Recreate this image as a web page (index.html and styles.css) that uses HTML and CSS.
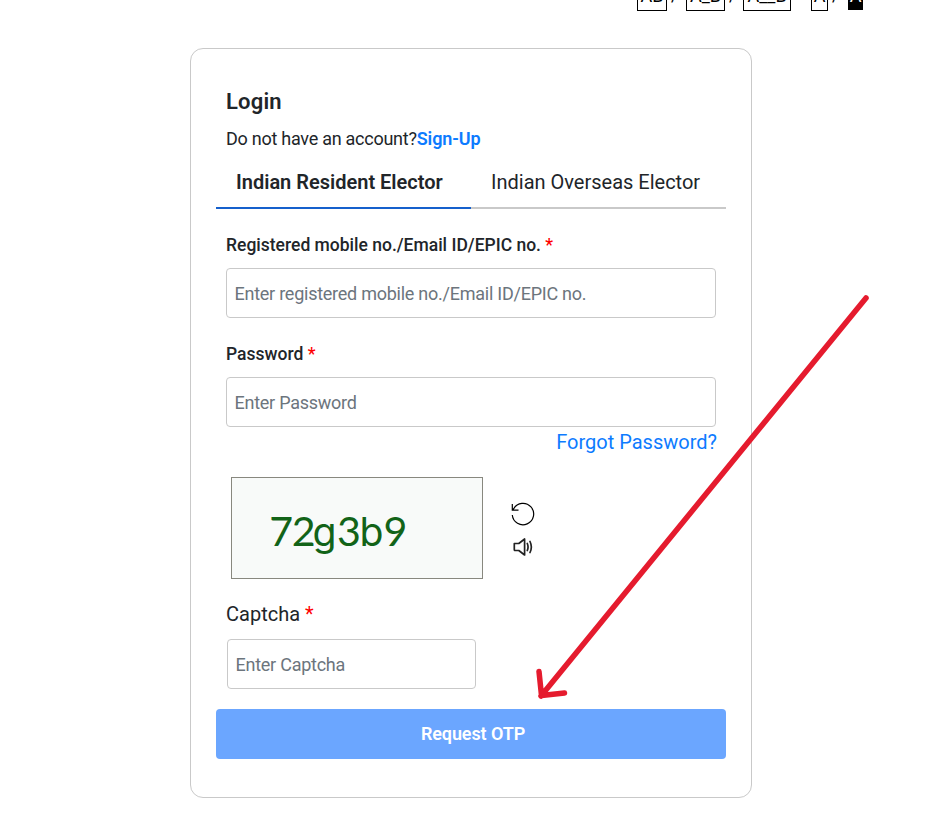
FILE: index.html
```
<!DOCTYPE html>
<html lang="en">
<head>
    <meta charset="UTF-8">
    <meta name="viewport" content="width=device-width, initial-scale=1.0">
    <title>Login</title>
    <link rel="stylesheet" href="styles.css">
</head>
<body>
    <div class="toolbar">
        <span class="box box-sm">AB</span>
        <span class="slash">/</span>
        <span class="box box-md">A_B</span>
        <span class="slash">/</span>
        <span class="box box-lg">A__B</span>
        <span class="box box-light">A</span>
        <span class="slash">/</span>
        <span class="box box-dark">A</span>
    </div>

    <form class="card">
        <h1>Login</h1>
        <p class="signup">Do not have an account?<a href="#">Sign-Up</a></p>

        <div class="tabs">
            <div class="tab active">Indian Resident Elector</div>
            <div class="tab">Indian Overseas Elector</div>
        </div>

        <div class="field">
            <label for="username">Registered mobile no./Email ID/EPIC no. <span class="required">*</span></label>
            <input type="text" id="username" placeholder="Enter registered mobile no./Email ID/EPIC no.">
        </div>

        <div class="field field-password">
            <label for="password">Password <span class="required">*</span></label>
            <input type="password" id="password" placeholder="Enter Password">
            <a class="forgot" href="#">Forgot Password?</a>
        </div>

        <div class="captcha">
            <svg class="captcha-image" width="252" height="102" viewBox="0 0 252 102">
                <text x="36.500 59.500 80.500 105.500 128.500 153" y="69.500">72<tspan class="round">g</tspan>3<tspan class="round">b</tspan>9</text>
            </svg>
            <div class="captcha-actions">
                <svg width="24" height="24" viewBox="0 0 24 24" fill="none" stroke="#000" stroke-width="1.2">
                    <path d="M1.300 2v6.200h6.200M1.300 13a10.700 10.700 0 1 0 1.400-6.300L1.600 8"/>
                </svg>
                <svg width="20" height="18" viewBox="0 0 20 18" fill="none" stroke="#222" stroke-width="1.700" stroke-linejoin="round" stroke-linecap="round">
                    <path d="M1.500 5.500h4.300L11.600 1v16l-5.800-4.500H2.200q-.9 0-.9-.9V5.500z"/>
                    <path d="M14.300 5.500q1.500 3.500 0 7M17 3.500q2.700 5.500 0 11"/>
                </svg>
            </div>
        </div>

        <div class="field-captcha">
            <label for="captcha">Captcha <span class="required">*</span></label>
            <input type="text" id="captcha" placeholder="Enter Captcha">
        </div>

        <button type="button">Request OTP</button>
    </form>

    <!-- Arrow pointing to the button -->
    <svg class="arrow" width="938" height="814" viewBox="0 0 938 814">
        <path d="M866 298L541 696M539 671.500l2.500 24L564.500 693"/>
    </svg>
</body>
</html>
```

FILE: styles.css
```
* {
    box-sizing: border-box;
}

body {
    font-family: Roboto, "Liberation Sans", sans-serif;
    margin: 0;
    height: 814px;
    overflow: hidden;
    background-color: #ffffff;
    color: #212529;
}

/* Accessibility bar */
.toolbar {
    display: flex;
    height: 48px;
    margin-top: -13px;
    padding-left: 637px;
    margin-bottom: 13px;
    font-size: 18px;
    line-height: 15px;
    color: #000000;
}

.box {
    height: 24px;
    border: 1px solid #000000;
    text-align: center;
    white-space: nowrap;
}

.box-sm {
    width: 30px;
}

.box-md {
    width: 39px;
}

.box-lg {
    width: 48px;
}

.box-light {
    width: 17px;
    margin-left: 20px;
}

.box-dark {
    width: 15px;
    height: 23px;
    background-color: #000000;
    color: #ffffff;
}

.slash {
    width: 19px;
    padding-left: 4px;
}

.box-md + .slash {
    width: 18px;
}

.box-light + .slash {
    width: 20px;
}

/* Login card */
.card {
    width: 562px;
    height: 750px;
    margin-left: 190px;
    padding: 39px 25px 0;
    border: 1px solid #c9c9c9;
    border-radius: 13px;
}

h1 {
    margin: 0 10px;
    font-size: 22px;
    font-weight: 600;
    line-height: 28px;
    letter-spacing: 0.2px;
}

.signup {
    margin: 9px 10px 0;
    font-size: 18px;
    line-height: 27px;
    letter-spacing: -0.26px;
}

a {
    color: #0d7bff;
    text-decoration: none;
}

.signup a {
    font-weight: 600;
    letter-spacing: -0.1px;
}

/* Tabs */
.tabs {
    display: flex;
    margin-top: 4px;
    font-size: 20px;
}

.tab {
    width: 255px;
    height: 53px;
    padding: 11px 20px;
    border-bottom: 2px solid #c9c9c9;
    line-height: 30px;
    white-space: nowrap;
}

.tab.active {
    border-color: #1560cc;
    font-weight: 600;
}

/* Fields */
.field {
    height: 109px;
    margin: 22px 10px 0;
}

.field-password {
    height: 138px;
    margin-top: 0;
}

label {
    display: block;
    height: 37px;
    padding-top: 1px;
    font-size: 17.500px;
    font-weight: 500;
    line-height: 27px;
}

.required {
    color: #ff0000;
}

input {
    display: block;
    width: 100%;
    height: 50px;
    padding: 0 7.500px;
    border: 1px solid #c9c9c9;
    border-radius: 4px;
    font-family: inherit;
    font-size: 18px;
    letter-spacing: -0.25px;
    outline: none;
}

input::placeholder {
    color: #6c757d;
}

.forgot {
    display: block;
    margin-right: -1px;
    font-size: 20px;
    line-height: 30px;
    text-align: right;
}

/* Captcha */
.captcha {
    display: flex;
    margin: -1px 15px 0;
}

.captcha-image {
    border: 1px solid #88887f;
    background-color: #f8faf9;
}

.captcha-image text {
    fill: #126318;
    font-family: Lato, sans-serif;
    font-size: 42px;
}

.captcha-image .round {
    font-family: Inter, sans-serif;
    font-size: 40px;
}

.captcha-actions {
    display: flex;
    flex-direction: column;
    align-items: center;
    gap: 12px;
    margin-left: 28px;
    padding-top: 25px;
}

.field-captcha {
    margin: 20px 11px 0;
}

.field-captcha label {
    height: 40px;
    margin-left: -1px;
    padding-top: 0;
    font-size: 20px;
    font-weight: 400;
    line-height: 30px;
}

.field-captcha input {
    width: 249px;
}

button {
    display: block;
    width: 100%;
    height: 50px;
    margin-top: 20px;
    padding: 0 0 2px 4px;
    border: none;
    border-radius: 4px;
    background-color: #6ba6ff;
    color: #ffffff;
    font-family: inherit;
    font-size: 18px;
    font-weight: 600;
    letter-spacing: -0.1px;
}

.arrow {
    position: absolute;
    top: 0;
    left: 0;
    fill: none;
    stroke: #e51b2e;
    stroke-width: 5.500;
    stroke-linecap: round;
    stroke-linejoin: round;
    pointer-events: none;
}
```
